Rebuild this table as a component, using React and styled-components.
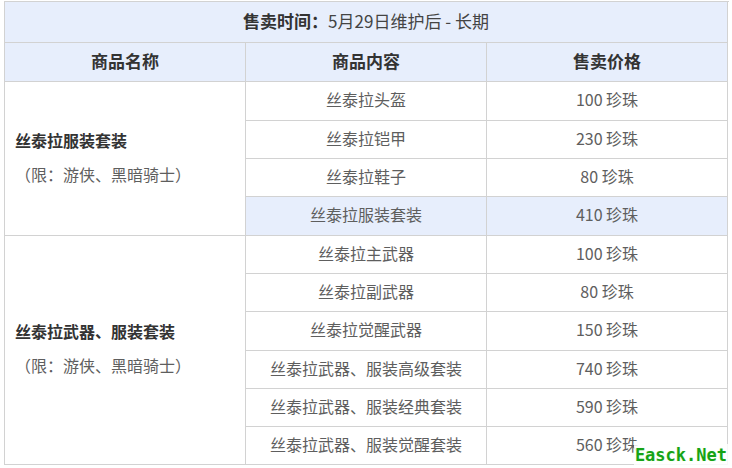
import React from "react";
import styled, { createGlobalStyle } from "styled-components";

const GlobalStyle = createGlobalStyle`
  html, body {
    margin: 0;
    padding: 0;
    background: #ffffff;
  }
  body {
    font-family: "Noto Sans CJK SC", "Noto Sans", sans-serif;
  }
`;

const Page = styled.div`
  position: relative;
  width: 732px;
  height: 468px;
  padding: 1px 0 0 4px;
  box-sizing: border-box;
`;

const Table = styled.div`
  display: grid;
  width: 724px;
  grid-template-columns: repeat(3, 241px);
  grid-template-rows: 41px 39px 39px 38px 38px 39px 38px 38px 39px 38px 38px 38px;
  border-left: 1px solid #d2d2d2;
  border-top: 1px solid #d2d2d2;
  box-sizing: content-box;
`;

const Cell = styled.div`
  box-sizing: border-box;
  border-right: 1px solid #d2d2d2;
  border-bottom: 1px solid #d2d2d2;
  display: flex;
  align-items: center;
  justify-content: center;
  padding-bottom: 4px;
  font-size: 16px;
  color: #5e5e5e;
  background: ${(p) => (p.$tint ? "#e7eefc" : "#ffffff")};
  white-space: nowrap;
`;

const TitleCell = styled(Cell)`
  grid-column: 1 / span 3;
  background: #e7eefc;
  font-size: 17px;
  color: #444;

  b {
    font-weight: 700;
    color: #333;
  }
`;

const HeadCell = styled(Cell)`
  background: #e7eefc;
  font-size: 17px;
  font-weight: 700;
  color: #333;
`;

const NameCell = styled(Cell)`
  grid-row: span ${(p) => p.$span};
  flex-direction: column;
  align-items: flex-start;
  justify-content: center;
  gap: 12px;
  padding-left: 10px;
`;

const NameTitle = styled.div`
  font-weight: 700;
  color: #333;
  font-size: 16px;
  line-height: 22px;
`;

const NameNote = styled.div`
  color: #5e5e5e;
  font-size: 16px;
  line-height: 22px;
`;

const Watermark = styled.div`
  position: absolute;
  right: 4px;
  bottom: 2px;
  font-family: "DejaVu Sans Mono", "Liberation Mono", monospace;
  font-weight: 700;
  font-size: 17px;
  line-height: 22px;
  color: #16a316;
  background: rgba(255, 255, 255, 0.85);
  padding: 0 1px;
  text-shadow: 0 0 2px #e8ffe0, 0 0 2px #ffffff;
`;

const groups = [
  {
    name: "丝泰拉服装套装",
    note: "（限：游侠、黑暗骑士）",
    items: [
      ["丝泰拉头盔", "100 珍珠"],
      ["丝泰拉铠甲", "230 珍珠"],
      ["丝泰拉鞋子", "80 珍珠"],
      ["丝泰拉服装套装", "410 珍珠", true],
    ],
  },
  {
    name: "丝泰拉武器、服装套装",
    note: "（限：游侠、黑暗骑士）",
    items: [
      ["丝泰拉主武器", "100 珍珠"],
      ["丝泰拉副武器", "80 珍珠"],
      ["丝泰拉觉醒武器", "150 珍珠"],
      ["丝泰拉武器、服装高级套装", "740 珍珠"],
      ["丝泰拉武器、服装经典套装", "590 珍珠"],
      ["丝泰拉武器、服装觉醒套装", "560 珍珠"],
    ],
  },
];

export default function App() {
  return (
    <Page>
      <GlobalStyle />
      <Table>
        <TitleCell>
          <b>售卖时间：</b>5月29日维护后 - 长期
        </TitleCell>
        <HeadCell>商品名称</HeadCell>
        <HeadCell>商品内容</HeadCell>
        <HeadCell>售卖价格</HeadCell>
        {groups.map((g) =>
          g.items.map(([item, price, tint], i) => (
            <React.Fragment key={g.name + item}>
              {i === 0 && (
                <NameCell $span={g.items.length}>
                  <NameTitle>{g.name}</NameTitle>
                  <NameNote>{g.note}</NameNote>
                </NameCell>
              )}
              <Cell $tint={tint}>{item}</Cell>
              <Cell $tint={tint}>{price}</Cell>
            </React.Fragment>
          ))
        )}
      </Table>
      <Watermark>Easck.Net</Watermark>
    </Page>
  );
}
